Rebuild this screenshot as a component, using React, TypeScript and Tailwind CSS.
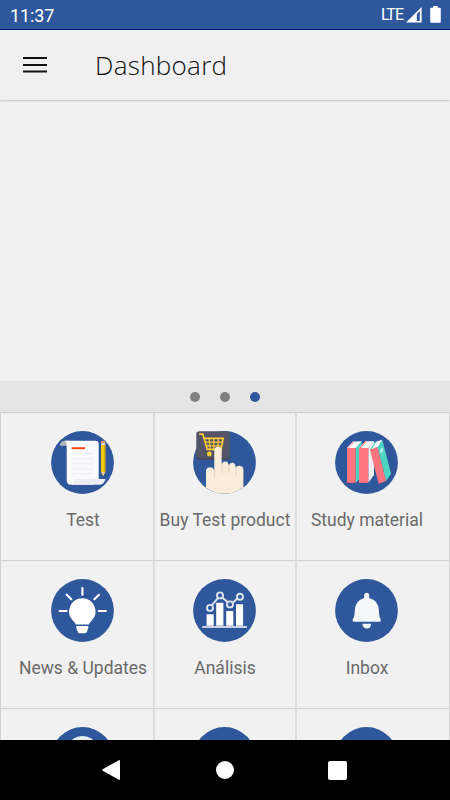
import type { ReactNode } from "react";

interface Tile {
  id: string;
  label: string;
  icon: ReactNode;
}

function IconDisc({ children }: { children?: ReactNode }) {
  return (
    <svg viewBox="0 0 63 63" className="block h-[63px] w-[63px] shrink-0">
      <circle cx="31.5" cy="31.5" r="31.4" fill="#2f579b" />
      {children}
    </svg>
  );
}

function TestIcon() {
  return (
    <IconDisc>
      <path d="M9 14.7C9 11 11.5 9.8 15 9.8H19V14.7Z" fill="#b5b6ba" />
      <path d="M13.5 9.8H44.5Q47.7 9.8 47.7 13V50L42 53.8H20Q15.7 53.5 15.7 49V14Q15.7 10.5 13.5 9.8Z" fill="#fbfbfd" />
      <path d="M23 48H54.5C53.5 52 51 53.8 48 53.8H20C22 53 23 51 23 48Z" fill="#edeef3" />
      <path d="M20.7 17.2H34" stroke="#ff3a12" strokeWidth="1.9" />
      <path d="M20.7 22.4H42.3M20.7 27.7H42.3M20.7 32.8H42.3M20.7 38H42.3M20.7 43H42.3" stroke="#eff0f5" strokeWidth="1.5" />
      <path d="M50 14H54.3V41L52.2 45L50 41Z" fill="#f5cd00" />
      <path d="M53 14H54.3V41H53Z" fill="#dca900" />
      <path d="M50 12.5V11Q50 9.8 52.1 9.8T54.3 11V12.5Z" fill="#e9a35f" />
      <path d="M50 12.3H54.3V14H50Z" fill="#e9e3d8" />
      <path d="M50 41H54.3L52.2 45Z" fill="#f3c5a0" />
    </IconDisc>
  );
}

function CartIcon() {
  return (
    <IconDisc>
      <rect x="3.3" y="0.2" width="33.6" height="28.6" rx="3" fill="#535466" />
      <path d="M3.5 25.5Q3.8 28.7 6.5 28.7H34Q36.8 28.5 36.9 25.5Q36 27 34 27H6.5Q4.3 27 3.5 25.5Z" fill="#46475a" />
      <g fill="none" stroke="#ffcc33">
        <path d="M6.2 3.2H9.8L14.3 18.4H28L30.2 7.4H11.5" strokeWidth="1.7" />
        <path d="M12.5 11.2H29.4M13.5 14.8H28.7M16.2 7.5L17.2 18.3M20.7 7.5V18.3M25.4 7.5L24.5 18.3" strokeWidth="1.2" />
      </g>
      <circle cx="16.3" cy="23" r="2.4" fill="#ffcc33" />
      <path
        d="M13 56.8V40Q13 36.5 17.5 36.3Q20 36.3 21.3 39V19Q21.5 15.7 25 15.7T28.7 19V34.5Q29 30.6 32.2 30.6T35.7 34.5Q36.5 31.8 39.3 31.8T42.8 36.2Q43.8 34.5 46.6 34.7Q50.4 35.2 50.4 39V56.5A31.4 31.4 0 0 1 13 56.8Z"
        fill="#f9ecd9"
      />
      <path d="M28.4 34V41L29.6 43V33ZM35.4 34V41L36.6 43V34ZM42.4 36V43L43.6 45V36ZM21 39V46L22.2 48V38Z" fill="#e5d6c2" />
    </IconDisc>
  );
}

function BooksIcon() {
  return (
    <IconDisc>
      <path d="M20.7 17L26.8 10.3V46L20.7 51.8Z" fill="#4cd6c1" />
      <path d="M12 17L18 10.8L26.8 10.3L20.7 17Z" fill="#fff" />
      <path d="M12 17L18 10.6H20.2L14 17Z" fill="#ffc3c6" />
      <path d="M12 17H20.7V51.8H12Z" fill="#ff757d" />
      <path d="M33.3 17L39 10.3V44L33.3 51.8Z" fill="#f1f1f4" />
      <path d="M24 17L30.3 10.3H39L33.3 17Z" fill="#fff" />
      <path d="M26 17L32.2 10.3H30.3L24 17Z" fill="#ff8e94" />
      <path d="M24 17H33.3V51.8H24Z" fill="#ff757d" />
      <path d="M42.5 16.2L47.3 8.8L56 43L51 50Z" fill="#4cd6c1" />
      <path d="M34.8 18.6L40 11L47.3 8.8L42.5 16.2Z" fill="#fff" />
      <path d="M34.8 18.6L40 11L41.6 10.5L36.6 18Z" fill="#4cd6c1" />
      <path d="M34.8 18.6L42.5 16.2L51 50L43.7 52.8Z" fill="#ff757d" />
      <path d="M44.8 19.8L48 17.2M45.4 21.8L48.6 19.2M46.8 17.5L46 22" stroke="#d9fbf5" strokeWidth="1" />
    </IconDisc>
  );
}

function BulbIcon() {
  return (
    <IconDisc>
      <g fill="#fff">
        <path d="M31.3 19.2A13.2 13.2 0 0 0 21.8 41.5Q24.2 43.3 24.7 45.6H38Q38.5 43.3 40.8 41.5A13.2 13.2 0 0 0 31.3 19.2Z" />
        <path d="M25.3 47H37.3V49L35.8 53Q35.3 54.3 33.8 54.3H28.8Q27.4 54.3 26.8 53L25.3 49Z" />
      </g>
      <path
        d="M31.4 9V15.8M8.6 32H15.6M47.8 32H54.8M15.7 15.7L20.3 20.2M48 15.7L43.4 20.2"
        fill="none"
        stroke="#fff"
        strokeWidth="2.2"
        strokeLinecap="round"
      />
    </IconDisc>
  );
}

function ChartIcon() {
  return (
    <IconDisc>
      <path d="M13.6 35.3H20.7V46.8H13.6ZM23.2 23.8H30.4V46.8H23.2ZM33.2 32H40.3V46.8H33.2ZM43 25.2H50.1V46.8H43Z" fill="#fff" />
      <path d="M9.2 48H54" stroke="#c9d3e5" strokeWidth="2" />
      <g fill="none" stroke="#dce3ef" strokeWidth="1.9">
        <path d="M18.8 26.4L25.1 18.9M29.1 18.5L34.9 23.2M39.7 23.7L44.4 19.5" />
        <circle cx="17" cy="28.9" r="3" />
        <circle cx="27" cy="16.4" r="3" />
        <circle cx="37" cy="25.4" r="3" />
        <circle cx="47" cy="17.7" r="3" />
      </g>
    </IconDisc>
  );
}

function BellIcon() {
  return (
    <IconDisc>
      <g fill="#f5f6f8">
        <path d="M31.6 13.8Q34.2 13.8 34.2 16.4V19Q43.8 21.5 43.9 31.5Q44 37.5 45.6 40.3Q46.6 42.8 44.3 42.8H19.3Q17 42.8 17.8 40.3Q19.7 37.5 19.8 31.5Q20 21.5 29.2 19V16.4Q29.2 13.8 31.6 13.8Z" />
        <path d="M27.3 44.7H36.2Q35.6 49.6 31.8 49.6T27.3 44.7Z" />
      </g>
    </IconDisc>
  );
}

const tiles: Tile[] = [
  { id: "test", label: "Test", icon: <TestIcon /> },
  { id: "buy", label: "Buy Test product", icon: <CartIcon /> },
  { id: "study", label: "Study material", icon: <BooksIcon /> },
  { id: "news", label: "News & Updates", icon: <BulbIcon /> },
  { id: "analysis", label: "Análisis", icon: <ChartIcon /> },
  { id: "inbox", label: "Inbox", icon: <BellIcon /> },
  {
    id: "extra-1",
    label: "",
    icon: (
      <IconDisc>
        <ellipse cx="31.5" cy="18" rx="13" ry="9" fill="#e8ecf3" />
      </IconDisc>
    ),
  },
  { id: "extra-2", label: "", icon: <IconDisc /> },
  { id: "extra-3", label: "", icon: <IconDisc /> },
];

// Padding and dividers for the left, middle and right column
const columnStyles = [
  "pl-[11px]",
  "border-r-2 border-l-2 border-r-[#dcdcdc] border-l-[#dcdcdc] pr-px",
  "pr-[13px]",
];

function StatusBar() {
  return (
    <div className="flex h-[30px] shrink-0 items-center border-b border-[#001b7c] bg-[#2f579b] pr-[9px] pl-[10px] text-white">
      <span className="pt-[2px] text-[18px] leading-none tracking-[-0.1px]">11:37</span>
      <span className="ml-auto pt-px text-[16px] leading-none tracking-[-1px]">LTE</span>
      <svg viewBox="0 0 16 16" className="ml-[3px] h-4 w-4">
        <path d="M0 15.6L15.6 0V15.6Z" fill="#fff" />
        <path d="M10.8 7L13.8 4V14H10.8Z" fill="#2f579b" />
      </svg>
      <svg viewBox="0 0 11 17" className="ml-2 h-[17px] w-[11px]">
        <path d="M3.2 0H7.8V1.8H9.8Q10.8 1.8 10.8 2.8V15.7Q10.8 16.7 9.8 16.7H1.2Q.2 16.7 .2 15.7V2.8Q.2 1.8 1.2 1.8H3.2Z" fill="#fff" />
      </svg>
    </div>
  );
}

function NavigationBar() {
  return (
    <div className="flex h-[60px] shrink-0 items-center justify-between bg-black pr-[103px] pl-[102px]">
      <svg viewBox="0 0 18 20" className="h-5 w-[18px]">
        <path d="M.7 9.3L16.8 .2Q18 -.2 18 1V19Q18 20.2 16.8 19.8L.7 10.7Q-.1 10 .7 9.3Z" fill="#fff" />
      </svg>
      <div className="ml-px h-[18px] w-[18px] rounded-full bg-white" />
      <div className="h-[19px] w-[19px] rounded-[2px] bg-white" />
    </div>
  );
}

export default function App() {
  return (
    <div className="flex h-[800px] w-[450px] flex-col overflow-hidden bg-[#f1f1f1] font-[Roboto,sans-serif]">
      <StatusBar />

      {/* App bar */}
      <header className="z-10 flex h-[70px] shrink-0 items-center bg-[#f0f0f0] pl-[23px] shadow-[0_1px_2px_rgba(0,0,0,0.2)]">
        <svg viewBox="0 0 24 16" className="h-4 w-6">
          <path d="M0 1H24M0 8H24M0 14.5H24" stroke="#111" strokeWidth="2" />
        </svg>
        <h1 className="ml-12 pb-px font-['Open_Sans',sans-serif] text-[26px] leading-none font-light tracking-[0.3px] text-[#111]">
          Dashboard
        </h1>
      </header>

      {/* Slider */}
      <div className="h-[281px] shrink-0" />
      <div className="flex h-[31px] shrink-0 items-center justify-center gap-5 bg-[#e4e4e4]">
        <span className="h-[10px] w-[10px] rounded-full bg-[#808080]" />
        <span className="h-[10px] w-[10px] rounded-full bg-[#808080]" />
        <span className="h-[10px] w-[10px] rounded-full bg-[#2f579b]" />
      </div>

      {/* Menu tiles */}
      <main className="min-h-0 flex-1 overflow-hidden">
        <div className="grid auto-rows-[148px] grid-cols-[152px_144px_152px] border-r border-l border-[#d2d2d2]">
          {tiles.map((tile, i) => (
            <div key={tile.id} className={`flex flex-col items-center border-t border-t-[#cfcfcf] pt-[18px] ${columnStyles[i % 3]}`}>
              {tile.icon}
              <span className="mt-[15px] pl-px text-[17.5px] leading-[22px] whitespace-nowrap text-[#6a6a6a]">{tile.label}</span>
            </div>
          ))}
        </div>
      </main>

      <NavigationBar />
    </div>
  );
}
